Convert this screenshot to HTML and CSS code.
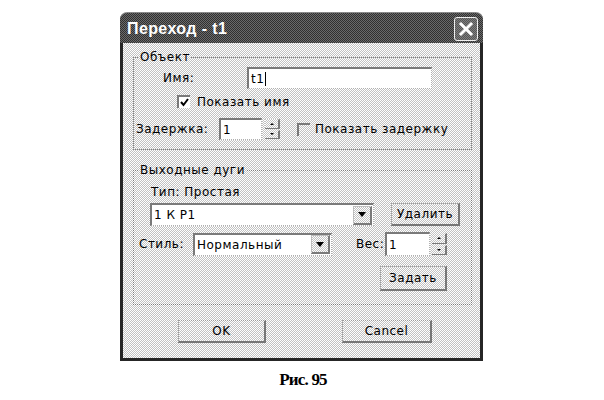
FILE: index.html
```html
<!DOCTYPE html>
<html lang="ru">
<head>
<meta charset="utf-8">
<title>Переход - t1</title>
<link rel="stylesheet" href="styles.css">
</head>
<body>
<div class="page">
  <div class="dialog">
    <div class="titlebar">
      <span class="title">Переход - t1</span>
      <span class="close"><svg width="16" height="16" viewBox="0 0 16 16"><path d="M3 3 L13 13 M13 3 L3 13" stroke="#fff" stroke-width="3" stroke-linecap="square"/></svg></span>
    </div>
    <div class="client">
      <fieldset class="group g1">
        <legend>Объект</legend>
        <div class="row r-name">
          <span class="lbl lbl-name">Имя:</span>
          <div class="field name-field">t1<span class="caret"></span></div>
        </div>
        <div class="row r-show">
          <span class="check checked"><svg width="9" height="9" viewBox="0 0 9 9"><path d="M1 4 L3.5 7 L8 1" fill="none" stroke="#000" stroke-width="2"/></svg></span>
          <span>Показать имя</span>
        </div>
        <div class="row r-delay">
          <span class="lbl lbl-delay">Задержка:</span>
          <div class="spin s1">
            <div class="field spin-field">1</div>
            <div class="spin-btns"><span class="sb"><i class="tri-up"></i></span><span class="sb"><i class="tri-down"></i></span></div>
          </div>
          <span class="check unchecked"></span>
          <span>Показать задержку</span>
        </div>
      </fieldset>

      <fieldset class="group g2">
        <legend>Выходные дуги</legend>
        <div class="row r-type">Тип: Простая</div>
        <div class="row r-combo">
          <div class="field combo c-arc">1 К Р1<span class="drop"><i class="tri"></i></span></div>
          <span class="btn b-del">Удалить</span>
        </div>
        <div class="row r-style">
          <span class="lbl lbl-style">Стиль:</span>
          <div class="field combo c-style">Нормальный<span class="drop"><i class="tri"></i></span></div>
          <span class="lbl lbl-weight">Вес:</span>
          <div class="spin s2">
            <div class="field spin-field">1</div>
            <div class="spin-btns"><span class="sb"><i class="tri-up"></i></span><span class="sb"><i class="tri-down"></i></span></div>
          </div>
        </div>
        <div class="row r-set">
          <span class="btn b-set">Задать</span>
        </div>
      </fieldset>

      <div class="row r-buttons">
        <span class="btn b-ok">OK</span>
        <span class="btn b-cancel">Cancel</span>
      </div>
    </div>
  </div>
  <div class="caption">Рис. 95</div>
</div>
</body>
</html>
```
FILE: styles.css
```css
* { box-sizing: border-box; }
body {
  margin: 0;
  background: #fff;
  font-family: "DejaVu Sans", "Noto Sans", sans-serif;
  font-size: 12px;
  letter-spacing: 0.5px;
  color: #000;
}
.page {
  width: 604px;
  height: 400px;
  display: flex;
  flex-direction: column;
}
.dialog {
  margin-top: 12px;
  margin-left: 120px;
  width: 363px;
}
.titlebar {
  height: 31px;
  border-radius: 7px 7px 0 0;
  background: repeating-conic-gradient(#303030 0 25%, #6a6a6a 0 50%) 0 0 / 2px 2px;
  display: flex;
  align-items: center;
  justify-content: space-between;
  padding: 0 5px 0 7px;
  border-top: 1px solid #8a8a8a;
}
.title {
  font-family: "Liberation Sans", Arial, sans-serif;
  font-weight: bold;
  font-size: 16px;
  letter-spacing: 0.4px;
  color: #fff;
  margin-top: 1px;
}
.close {
  width: 24px;
  height: 24px;
  border: 1px solid #f0f0f0;
  border-radius: 3px;
  background: repeating-conic-gradient(#555 0 25%, #808080 0 50%) 0 0 / 2px 2px;
  display: flex;
  align-items: center;
  justify-content: center;
  margin-top: 2px;
}
.client {
  height: 318px;
  border: 3px solid #262626;
  border-top: 0;
  background: repeating-conic-gradient(#c2c2c2 0 25%, #fff 0 50%) 0 0 / 2px 2px;
  padding: 7px 8px 0 10px;
}
.group {
  margin: 0;
  padding: 0;
  min-width: 0;
  border: 1px dotted #7e7e7e;
}
.group legend {
  padding: 0 1px;
  margin-left: 5px;
  line-height: 14px;
  font-size: 12px;
}
.g1 { padding: 3px 0 9px 0; }
.g2 { margin-top: 13px; padding: 8px 0 13px 0; }
.row { display: flex; align-items: center; }
.lbl { flex: none; }

/* fields */
.field {
  background: #fff;
  border-top: 2px solid #7a7a7a;
  border-left: 2px solid #7a7a7a;
  border-right: 1px dotted #b0b0b0;
  border-bottom: 1px dotted #b0b0b0;
  display: flex;
  align-items: center;
  padding-left: 2px;
  color: #000;
}
.caret { width: 1px; height: 14px; background: #000; margin-left: 1px; }

.r-name { height: 22px; }
.lbl-name { margin-left: 29px; width: 84px; }
.name-field { width: 185px; height: 22px; }

.r-show { margin-top: 6px; height: 13px; margin-left: 43px; gap: 7px; }
.check {
  width: 13px; height: 13px; flex: none;
  border-top: 2px solid #7a7a7a;
  border-left: 2px solid #7a7a7a;
  display: flex; align-items: center; justify-content: center;
}
.checked { background: #fff; }
.unchecked {
  background: repeating-conic-gradient(#c2c2c2 0 25%, #fff 0 50%) 0 0 / 2px 2px;
  margin-left: 15px;
  margin-right: 5px;
}

.r-delay { margin-top: 10px; height: 22px; margin-left: 2px; }
.lbl-delay { width: 83px; }

.spin { display: flex; height: 22px; flex: none; }
.s1 .spin-field { width: 43px; }
.spin-field { height: 100%; }
.spin-btns {
  width: 20px;
  display: flex; flex-direction: column;
  padding: 1px 2px 1px 3px;
  gap: 1px;
}
.sb {
  flex: 1;
  background: repeating-conic-gradient(#c2c2c2 0 25%, #fff 0 50%) 0 0 / 2px 2px;
  border-right: 2px solid #7a7a7a;
  border-bottom: 1px solid #7a7a7a;
  border-top: 1px dotted #c8c8c8;
  display: flex; align-items: center; justify-content: center;
}
.tri-up { width: 0; height: 0; border-left: 2px solid transparent; border-right: 2px solid transparent; border-bottom: 2px solid #000; }
.tri-down { width: 0; height: 0; border-left: 2px solid transparent; border-right: 2px solid transparent; border-top: 2px solid #000; }

.r-type { height: 14px; margin-left: 17px; }
.r-combo { margin-top: 4px; height: 23px; }
.combo { height: 23px; justify-content: space-between; padding-right: 1px; }
.c-arc { width: 224px; margin-left: 16px; }
.drop {
  width: 19px; height: 19px;
  background: repeating-conic-gradient(#c2c2c2 0 25%, #fff 0 50%) 0 0 / 2px 2px;
  border-right: 2px solid #7a7a7a;
  border-bottom: 2px solid #7a7a7a;
  border-top: 1px dotted #b8b8b8;
  border-left: 1px dotted #b8b8b8;
  display: flex; align-items: center; justify-content: center;
}
.tri { width: 0; height: 0; border-left: 4px solid transparent; border-right: 4px solid transparent; border-top: 5px solid #000; }

.btn {
  display: flex; align-items: center; justify-content: center;
  background: repeating-conic-gradient(#c2c2c2 0 25%, #fff 0 50%) 0 0 / 2px 2px;
  border-top: 1px dotted #9a9a9a;
  border-left: 1px dotted #9a9a9a;
  border-right: 2px solid #777;
  border-bottom: 2px solid #777;
  color: #000;
  flex: none;
}
.b-del { width: 69px; height: 23px; margin-left: 17px; }

.r-style { margin-top: 6px; height: 24px; }
.lbl-style { margin-left: 5px; width: 54px; }
.c-style { width: 139px; }
.lbl-weight { margin-left: 24px; width: 29px; }
.s2 { height: 24px; }
.s2 .spin-field { width: 45px; }
.s2 .spin-btns { width: 18px; padding: 1px 1px 1px 2px; }

.r-set { margin-top: 10px; }
.b-set { width: 67px; height: 25px; margin-left: 246px; }

.r-buttons { margin-top: 15px; }
.b-ok { width: 88px; height: 23px; margin-left: 45px; }
.b-cancel { width: 90px; height: 23px; margin-left: 76px; }

.caption {
  margin-top: 9px;
  text-align: center;
  font-family: "Liberation Serif", "Times New Roman", serif;
  font-weight: bold;
  font-size: 17px;
  line-height: 20px;
  letter-spacing: -0.8px;
  color: #000;
  padding-left: 2px;
}
```
